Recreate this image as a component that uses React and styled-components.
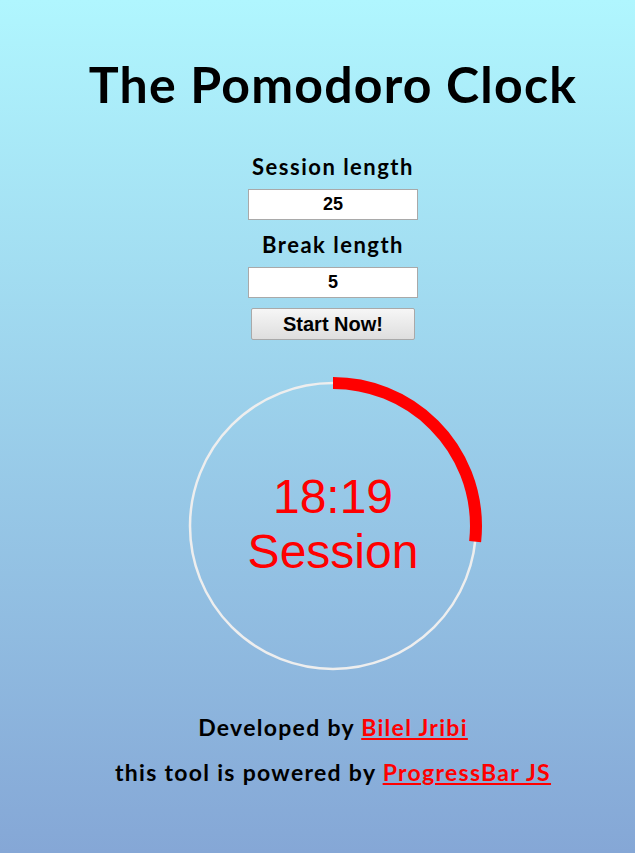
import React from 'react'
import styled, { createGlobalStyle } from 'styled-components'

const GlobalStyle = createGlobalStyle`
  html, body {
    margin: 0;
    padding: 0;
  }
  body {
    min-height: 853px;
    background: linear-gradient(to bottom, #b0f6fe 0%, #85a7d6 100%);
    font-family: 'Lato', 'DejaVu Sans', sans-serif;
  }
`

const Page = styled.div`
  display: flex;
  flex-direction: column;
  align-items: center;
  padding: 54px 0 0 31px;
  height: 853px;
  box-sizing: border-box;
`

const Title = styled.h1`
  margin: 0;
  font-size: 50px;
  font-weight: 700;
  color: #000;
  letter-spacing: 1.2px;
`

const Form = styled.div`
  display: flex;
  flex-direction: column;
  align-items: center;
  margin-top: 41px;
`

const Label = styled.label`
  font-size: 22px;
  font-weight: 700;
  line-height: 24px;
  margin-bottom: 10px;
  letter-spacing: 1.5px;
`

const NumberInput = styled.input`
  width: 170px;
  height: 31px;
  box-sizing: border-box;
  border: 1px solid #a9a9a9;
  background: #fff;
  text-align: center;
  font-family: 'Liberation Sans', Arial, sans-serif;
  font-weight: 700;
  font-size: 18px;
  margin-bottom: ${p => p.$gap || 0}px;
  outline: none;
`

const StartButton = styled.button`
  width: 164px;
  height: 32px;
  margin-top: 10px;
  border: 1px solid #a9a9a9;
  border-radius: 2px;
  background: linear-gradient(to bottom, #f6f6f6, #dedede);
  font-family: 'Liberation Sans', Arial, sans-serif;
  font-weight: 700;
  font-size: 20px;
  color: #000;
`

const Dial = styled.div`
  position: relative;
  width: 300px;
  height: 300px;
  margin-top: 36px;
`

const DialText = styled.div`
  position: absolute;
  inset: 0;
  display: flex;
  flex-direction: column;
  align-items: center;
  justify-content: center;
  color: #ff0000;
  font-family: 'Liberation Sans', Arial, sans-serif;
  font-size: 48px;
  line-height: 55px;
  padding-bottom: 4px;
`

const Footer = styled.div`
  display: flex;
  flex-direction: column;
  align-items: center;
  gap: 19px;
  margin-top: 38px;
`

const Credit = styled.p`
  margin: 0;
  font-size: 23px;
  font-weight: 700;
  line-height: 26px;
  letter-spacing: 1.3px;
`

const Anchor = styled.a`
  color: #ff0000;
  text-decoration: underline;
`

const R = 143
const C = 2 * Math.PI * R

const App = () => {
  const progress = 401 / 1500
  return (
    <>
      <GlobalStyle />
      <Page>
        <Title>The Pomodoro Clock</Title>
        <Form>
          <Label>Session length</Label>
          <NumberInput type="text" defaultValue="25" $gap={13} />
          <Label>Break length</Label>
          <NumberInput type="text" defaultValue="5" />
          <StartButton>Start Now!</StartButton>
        </Form>
        <Dial>
          <svg width="300" height="300" viewBox="0 0 300 300">
            <circle cx="150" cy="150" r={R} fill="none" stroke="#eeeeee" strokeWidth="2.5" />
            <circle
              cx="150"
              cy="150"
              r={R}
              fill="none"
              stroke="#ff0000"
              strokeWidth="12"
              strokeDasharray={`${C * progress} ${C}`}
              transform="rotate(-90 150 150)"
            />
          </svg>
          <DialText>
            <span>18:19</span>
            <span>Session</span>
          </DialText>
        </Dial>
        <Footer>
          <Credit>
            Developed by <Anchor href="#">Bilel Jribi</Anchor>
          </Credit>
          <Credit>
            this tool is powered by <Anchor href="#">ProgressBar JS</Anchor>
          </Credit>
        </Footer>
      </Page>
    </>
  )
}

export default App
